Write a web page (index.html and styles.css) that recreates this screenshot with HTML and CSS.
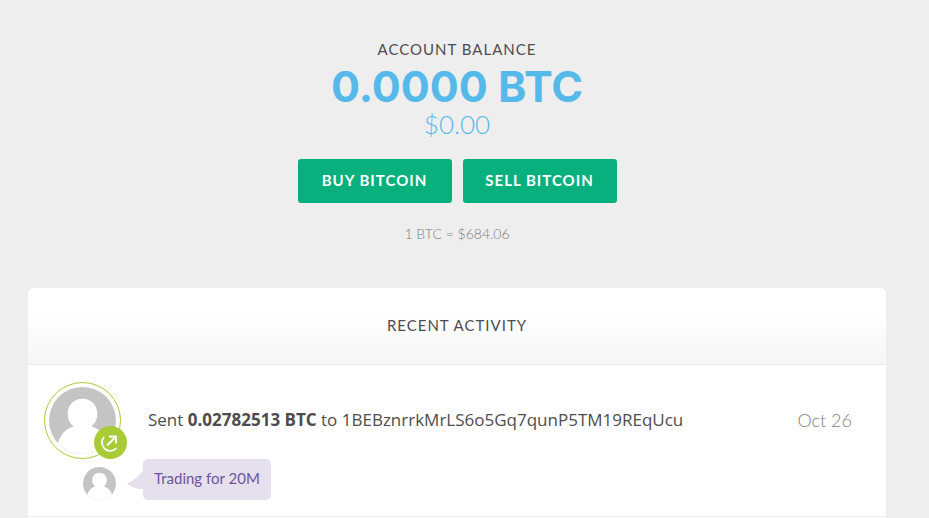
FILE: index.html
```html
<!DOCTYPE html>
<html lang="en">
<head>
    <meta charset="UTF-8">
    <meta name="viewport" content="width=device-width, initial-scale=1.0">
    <title>Account</title>
    <link rel="stylesheet" href="styles.css">
</head>
<body>

<main class="page">
    <section class="balance">
        <h1 class="label">Account Balance</h1>
        <div class="balance-btc">0.0000 BTC</div>
        <div class="balance-usd">$0.00</div>
        <div class="balance-actions">
            <button type="button" class="btn">Buy Bitcoin</button>
            <button type="button" class="btn">Sell Bitcoin</button>
        </div>
        <div class="rate">1 BTC = $684.06</div>
    </section>

    <section class="card">
        <header class="card-header">
            <h2 class="label">Recent Activity</h2>
        </header>

        <article class="activity">
            <div class="activity-row">
                <div class="avatar">
                    <svg class="avatar-picture" viewBox="0 0 68 68" aria-hidden="true">
                        <clipPath id="face"><circle cx="34" cy="34" r="34"/></clipPath>
                        <g clip-path="url(#face)">
                            <rect width="68" height="68" fill="#c4c4c4"/>
                            <path fill="#fff" d="M34 12c9 0 15 6.500 15 15 0 6-2 10-6 13 8 2 14 8 17 17v11H9V57c3-9 8-15 16-17-4-3-6-7-6-13 0-8.500 6-15 15-15z"/>
                        </g>
                    </svg>
                    <svg class="avatar-badge" viewBox="0 0 33 33" aria-hidden="true">
                        <circle cx="16.500" cy="16.500" r="16.500" fill="#a9cb38"/>
                        <path fill="none" stroke="#fff" stroke-width="1.800" d="M10 11a8 8 0 0 0 12.500 11M13 19.500L22 10.500M15 10.500h7v7"/>
                    </svg>
                </div>
                <p class="activity-text">Sent <strong>0.02782513 BTC</strong> to 1BEBznrrkMrLS6o5Gq7qunP5TM19REqUcu</p>
                <time class="activity-date">Oct 26</time>
            </div>
            <div class="note">
                <svg class="note-avatar" viewBox="0 0 68 68" aria-hidden="true">
                    <g clip-path="url(#face)">
                        <rect width="68" height="68" fill="#c4c4c4"/>
                        <path fill="#fff" d="M34 12c9 0 15 6.500 15 15 0 6-2 10-6 13 8 2 14 8 17 17v11H9V57c3-9 8-15 16-17-4-3-6-7-6-13 0-8.500 6-15 15-15z"/>
                    </g>
                </svg>
                <div class="note-bubble">
                    <svg class="note-tail" viewBox="0 0 16 20" aria-hidden="true">
                        <path fill="#e6e0ee" d="M16 0C12 5 7 9 0 12.500 4 16 9 18 16 18z"/>
                    </svg>
                    Trading for 20M
                </div>
            </div>
        </article>
    </section>
</main>

</body>
</html>
```

FILE: styles.css
```css
body {
    margin: 0;
    background-color: #eee;
    font-family: Lato, sans-serif;
    color: #4d4d4d;
    overflow: hidden;
}

.page {
    padding: 38px 43px 0 28px;
}

.label {
    margin: 0;
    font-size: 15px;
    font-weight: 400;
    line-height: 22px;
    letter-spacing: 1px;
    text-transform: uppercase;
}

.balance {
    text-align: center;
}

.balance-btc {
    margin-top: 2px;
    color: #55b9ea;
    font-family: Inter, sans-serif;
    font-size: 43px;
    font-weight: 700;
    line-height: 48px;
}

.balance-usd {
    color: #55b9ea;
    font-size: 26px;
    font-weight: 300;
    line-height: 28px;
}

.balance-actions {
    display: flex;
    justify-content: center;
    gap: 11px;
    margin: 21px 0 20px;
}

.btn {
    width: 154px;
    height: 44px;
    padding: 0 0 2px;
    border: none;
    border-radius: 3px;
    background-color: #07b07c;
    color: #fff;
    font-family: inherit;
    font-size: 15px;
    font-weight: 700;
    letter-spacing: 1px;
    text-transform: uppercase;
    cursor: pointer;
}

.rate {
    color: #808080;
    font-size: 14px;
    font-weight: 300;
    line-height: 22px;
}

.card {
    margin-top: 43px;
    padding-bottom: 16px;
    border-radius: 6px;
    background-color: #fff;
}

.card-header {
    padding: 26px 0 28px;
    border-bottom: 1px solid #ebebeb;
    border-radius: 6px 6px 0 0;
    background: linear-gradient(#fff 30%, #f6f6f6);
    text-align: center;
}

.activity {
    padding: 17px 34px 16px 16px;
    border-bottom: 1px solid #ebebeb;
}

.activity-row {
    display: flex;
    align-items: center;
}

.avatar {
    position: relative;
    box-sizing: border-box;
    width: 77px;
    height: 77px;
    margin-right: 27px;
    padding: 4px;
    border: 1px solid #a9cb38;
    border-radius: 50%;
}

.avatar-picture {
    display: block;
}

.avatar-badge {
    position: absolute;
    right: -7px;
    bottom: -1px;
    width: 33px;
    height: 33px;
}

.activity-text {
    flex: 1;
    margin: 0;
    padding-bottom: 2px;
    font-family: "Open Sans", sans-serif;
    font-size: 17px;
}

.activity-date {
    padding-bottom: 2px;
    color: #808080;
    font-size: 18px;
    font-weight: 300;
}

.note {
    display: flex;
    align-items: flex-end;
    gap: 27px;
    padding-left: 39px;
}

.note-avatar {
    width: 33px;
    height: 33px;
}

.note-bubble {
    position: relative;
    padding: 7px 11px 10px;
    border-radius: 5px;
    background-color: #e6e0ee;
    color: #6b559c;
    font-size: 15px;
    line-height: 24px;
}

.note-tail {
    position: absolute;
    top: 12px;
    left: -16px;
    width: 16px;
    height: 20px;
}
```
